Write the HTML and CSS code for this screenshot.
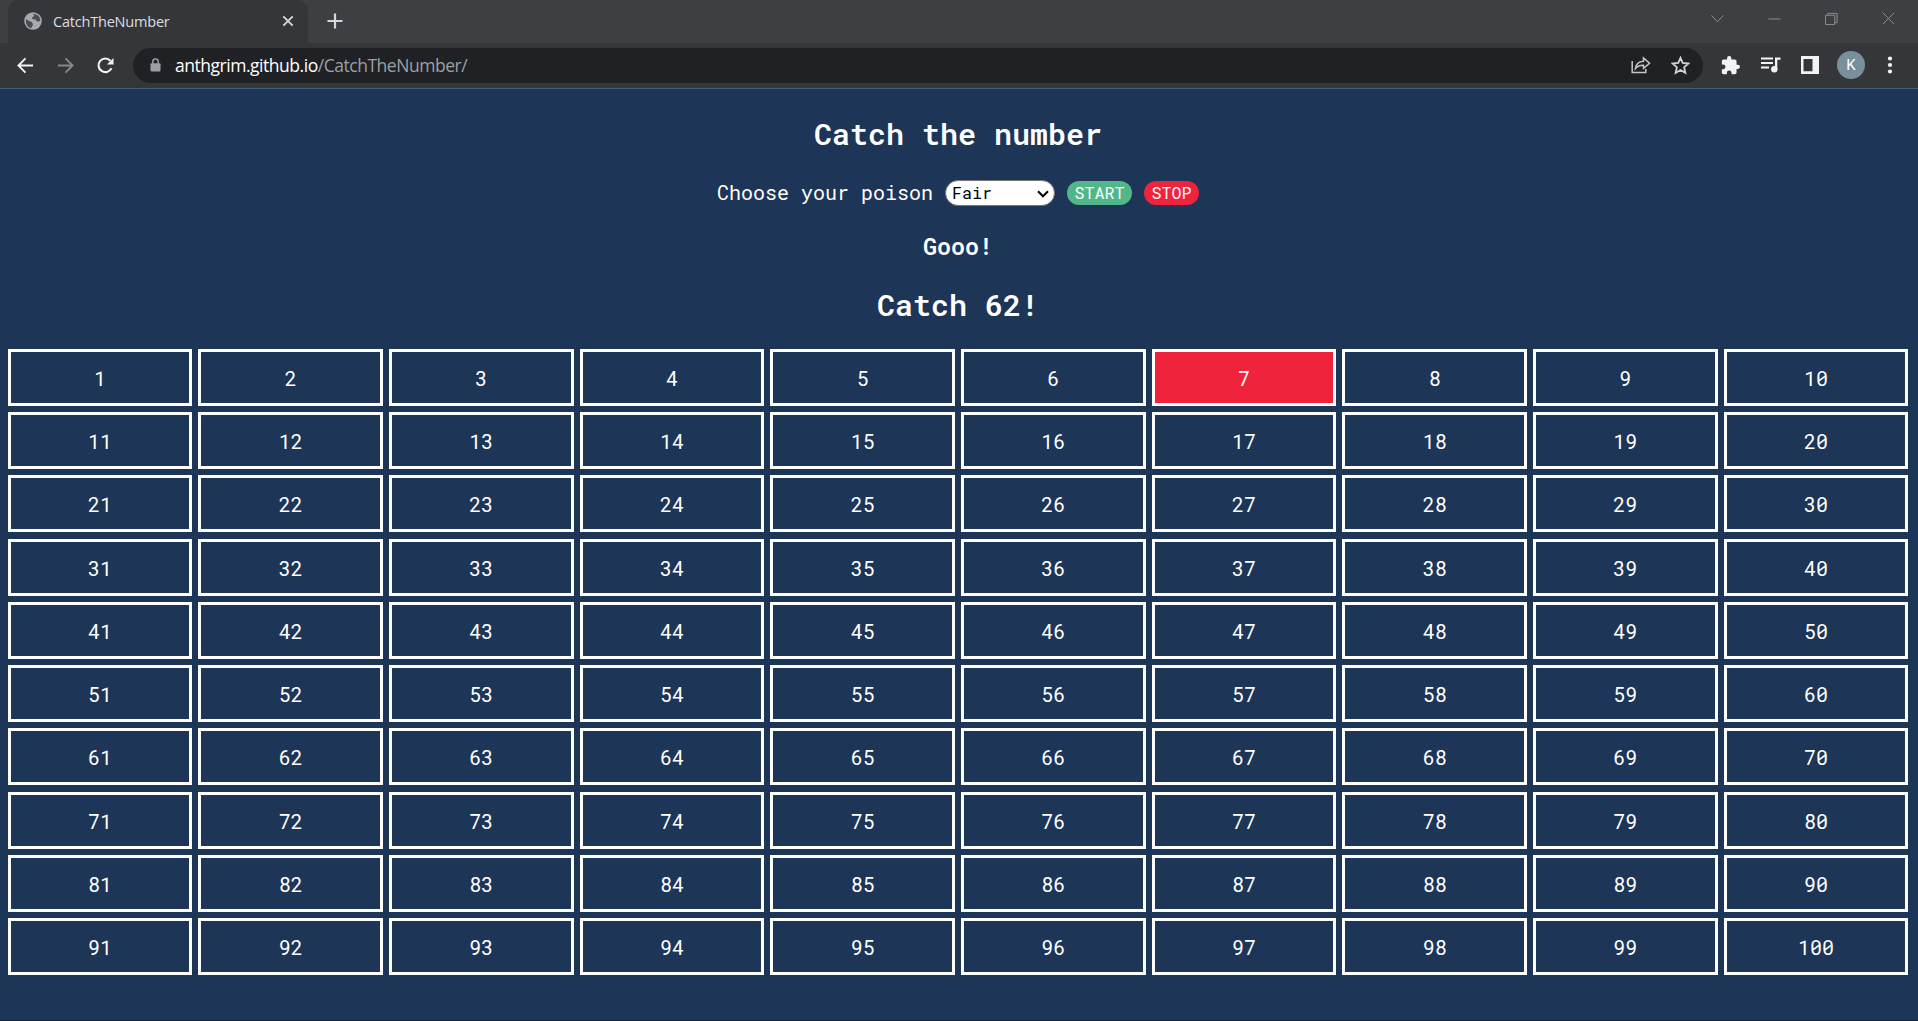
FILE: index.html
```html
<!DOCTYPE html>
<html lang="en">
<head>
<meta charset="utf-8">
<title>CatchTheNumber</title>
<link rel="stylesheet" href="styles.css">
</head>
<body>
<header class="browser">
  <div class="tabstrip">
    <div class="tab">
      <svg class="globe" viewBox="0 0 18 18"><circle cx="9" cy="9" r="8.8" fill="#a6aaae"/><path d="M2 7 L5 9 L8 10 L9 13 L7 16.3 Q2.5 15 1.8 10Z M9 2 Q13 1.5 15.5 5 L16.3 9 L13 9.5 L11.5 7.5 L8 7 L8.5 5 L10.5 4Z" fill="#4b4d51"/></svg>
      <span class="tab-title">CatchTheNumber</span>
      <svg class="tab-close" viewBox="0 0 12 12"><path d="M1.3 1.3 10.7 10.7M10.7 1.3 1.3 10.7" stroke="#d5d7da" stroke-width="1.8"/></svg>
    </div>
    <svg class="new-tab" viewBox="0 0 16 16"><path d="M8 .5V15.5M.5 8H15.5" stroke="#d5d7da" stroke-width="2.2"/></svg>
    <div class="window-controls">
      <svg viewBox="0 0 14 14"><path d="M.5 3.5 7 10.5 13.500 3.500"/></svg>
      <svg viewBox="0 0 14 14"><path d="M.5 7.500H13.500"/></svg>
      <svg viewBox="0 0 14 14"><path d="M.5 3.500H10.500V13.500H.5ZM3 3.500V1.500H13V11.500H10.500"/></svg>
      <svg viewBox="0 0 14 14"><path d="M.8 .8 13.200 13.200M13.200 .8 .8 13.200"/></svg>
    </div>
  </div>
  <div class="toolbar">
    <svg class="nav-icon" viewBox="0 0 18 18"><path d="M17 9H2M9 1.500 1.500 9 9 16.500" fill="none" stroke="#f1f3f4" stroke-width="2"/></svg>
    <svg class="nav-icon" viewBox="0 0 18 18"><path d="M1 9H16M9 1.500 16.500 9 9 16.500" fill="none" stroke="#85878a" stroke-width="2"/></svg>
    <svg class="nav-icon" viewBox="0 0 18 18"><path d="M15.300 12A7.200 7.200 0 1 1 14.200 4" fill="none" stroke="#f1f3f4" stroke-width="2.200"/><path d="M17.500 1V8H10.500Z" fill="#f1f3f4"/></svg>
    <div class="omnibox">
      <svg class="lock" viewBox="0 0 12 15"><path d="M3 6V4A3 3 0 0 1 9 4V6" fill="none" stroke="#9aa0a6" stroke-width="1.600"/><rect x=".5" y="5.500" width="11" height="9" rx="1.200" fill="#9aa0a6"/></svg>
      <span class="url"><span class="host">anthgrim.github.io</span><span class="path">/CatchTheNumber/</span></span>
      <svg class="share" viewBox="0 0 20 18"><g fill="none" stroke="#c4c7ca" stroke-width="1.500"><path d="M1.200 5V16.500H14.800V13"/><path d="M4.500 12.500C5 7.500 8 5.500 12.500 5.300V2L18.500 7.300 12.500 12.300V9.300C9 9.200 6.500 10 4.500 12.500Z"/></g></svg>
      <svg class="star" viewBox="0 0 18 18"><path d="M9 1.700 11.100 6.600 16.500 7.100 12.400 10.700 13.600 16 9 13.200 4.400 16 5.600 10.700 1.500 7.100 6.900 6.600Z" fill="none" stroke="#d0d2d5" stroke-width="1.700"/></svg>
    </div>
    <svg class="puzzle" viewBox="1 1 22 22"><path d="M20.500 11H19V7c0-1.100-.9-2-2-2h-4V3.500a2.500 2.500 0 0 0-5 0V5H4c-1.100 0-2 .9-2 2v3.800h1.500a2.700 2.700 0 0 1 0 5.400H2V20c0 1.100.9 2 2 2h3.800v-1.500a2.700 2.700 0 0 1 5.400 0V22H17c1.100 0 2-.9 2-2v-4h1.500a2.500 2.500 0 0 0 0-5z" fill="#f1f3f4"/></svg>
    <svg class="media" viewBox="0 0 20 18"><path d="M0 2.500H12M0 7H12M0 11.500H8" stroke="#f1f3f4" stroke-width="2"/><path d="M14 1.500H19.500V3.700H16.300V13H14Z" fill="#f1f3f4"/><circle cx="13.300" cy="13.300" r="3.200" fill="#f1f3f4"/></svg>
    <svg class="panel" viewBox="0 0 18 18"><path d="M0 0H18V18H0ZM2.500 3V15.300H11.500V3Z" fill="#f1f3f4" fill-rule="evenodd"/></svg>
    <span class="avatar">K</span>
    <svg class="menu" viewBox="0 0 6 18"><g fill="#f1f3f4"><circle cx="3" cy="2.500" r="2.100"/><circle cx="3" cy="9" r="2.100"/><circle cx="3" cy="15.500" r="2.100"/></g></svg>
  </div>
</header>
<main class="game">
  <h1 class="title">Catch the number</h1>
  <div class="controls">
    <label class="label" for="level">Choose your poison</label>
    <span class="select-wrap">
      <select class="level" id="level"><option>Fair</option></select>
      <svg class="chevron" viewBox="0 0 12 8"><path d="M1 1.300 6 6.300 11 1.300" fill="none" stroke="#000" stroke-width="2"/></svg>
    </span>
    <button class="btn start">START</button>
    <button class="btn stop">STOP</button>
  </div>
  <h3 class="status">Gooo!</h3>
  <h2 class="target">Catch 62!</h2>
  <div class="grid" id="grid"></div>
</main>
<script src="script.js"></script>
</body>
</html>
```
FILE: styles.css
```css
* { box-sizing: border-box; }
body {
  margin: 0;
  height: 1021px;
  overflow: hidden;
  display: flex;
  flex-direction: column;
  background: #1d3557;
  color: #fff;
  font-family: "Roboto Mono", "DejaVu Sans Mono", monospace;
}
svg { display: block; flex: none; }

.browser {
  height: 89px;
  flex: none;
  background: #35363a;
  border-bottom: 1px solid #4a5d80;
  font-family: "Segoe UI", "Open Sans", sans-serif;
}
.tabstrip { height: 43px; display: flex; align-items: center; background: #3c4043; padding-left: 8px; }
.tab {
  width: 300px;
  height: 43px;
  display: flex;
  align-items: center;
  padding: 0 14px 1px 16px;
  background: #35363a;
  border-radius: 10px 10px 0 0;
}
.globe { width: 18px; height: 18px; }
.tab-title { margin-left: 11px; font-size: 14.5px; letter-spacing: -.2px; color: #dcdee1; }
.tab-close { width: 12px; height: 12px; margin-left: auto; }
.new-tab { width: 16px; height: 16px; margin: 0 0 1px 19px; }
.window-controls { margin-left: auto; display: flex; gap: 44px; padding: 0 23px 6px 0; }
.window-controls svg { width: 13px; height: 13px; fill: none; stroke: #909396; stroke-width: 1; }
.toolbar { height: 44px; display: flex; align-items: center; padding: 0 25px 0 17px; }
.nav-icon { width: 17px; height: 17px; margin-right: 23px; }
.omnibox {
  flex: 1;
  height: 35px;
  margin-left: -4px;
  display: flex;
  align-items: center;
  padding: 0 13px 0 17px;
  border-radius: 18px;
  background: #202124;
}
.lock { width: 11px; height: 14px; }
.url { margin-left: 14px; font-size: 17.5px; letter-spacing: -.47px; white-space: nowrap; }
.host { color: #fff; }
.path { color: #9aa0a6; }
.share { width: 20px; height: 18px; margin-left: auto; margin-right: 20px; }
.star { width: 19px; height: 19px; }
.puzzle { width: 19px; height: 19px; margin-left: 18px; }
.media { width: 20px; height: 18px; margin-left: 21px; }
.panel { width: 18px; height: 18px; margin-left: 20px; }
.avatar {
  width: 28px; height: 28px; margin-left: 18px;
  display: flex; align-items: center; justify-content: center;
  border-radius: 50%; background: #78909c;
  font: 15px Roboto, sans-serif;
}
.menu { width: 6px; height: 18px; margin-left: 22px; }

.game { flex: 1; display: flex; flex-direction: column; align-items: center; padding-right: 2px; border-bottom: 1px solid #142238; }
.title, .target { margin: 0; font-size: 30px; line-height: 40px; font-weight: 600; }
.title { margin-top: 25px; }
.controls { height: 26px; margin-top: 26px; display: flex; align-items: center; }
.label { font-size: 20px; line-height: 26px; margin-right: 12px; white-space: nowrap; position: relative; top: -1px; }
.select-wrap { display: flex; position: relative; margin-right: 12px; }
.level, .btn { font-family: inherit; font-size: 16.667px; line-height: 20px; border-radius: 13px; }
.level {
  width: 110px; height: 26px;
  padding: 0 6px;
  appearance: none;
  border: 1px solid #767676;
  background: #fff;
  color: #000;
}
.chevron { position: absolute; right: 6px; top: 10px; width: 12px; height: 8px; }
.btn { height: 24px; padding: 0 7px; border: 0; color: #fff; }
.start { width: 65px; margin-right: 12px; background: #52b788; }
.stop { width: 55px; background: #ef233c; }
.status { margin: 24px 0 0; font-size: 23.4px; line-height: 32px; font-weight: 600; }
.target { margin-top: 23px; }
.grid {
  width: 1900.5px;
  margin-top: 24px;
  display: grid;
  grid-template-columns: repeat(10, 1fr);
  grid-auto-rows: 56.97px;
  gap: 6.25px;
}
.cell {
  display: flex;
  align-items: center;
  justify-content: center;
  padding-top: 1px;
  border: 3px solid #fff;
  font-size: 20px;
  line-height: 26px;
}
.caught { background: #ef233c; }
```
FILE: script.js
```js
const grid = document.getElementById("grid");
for (let n = 1; n <= 100; n++) {
  const cell = document.createElement("div");
  cell.className = n === 7 ? "cell caught" : "cell";
  cell.textContent = n;
  grid.appendChild(cell);
}
```
